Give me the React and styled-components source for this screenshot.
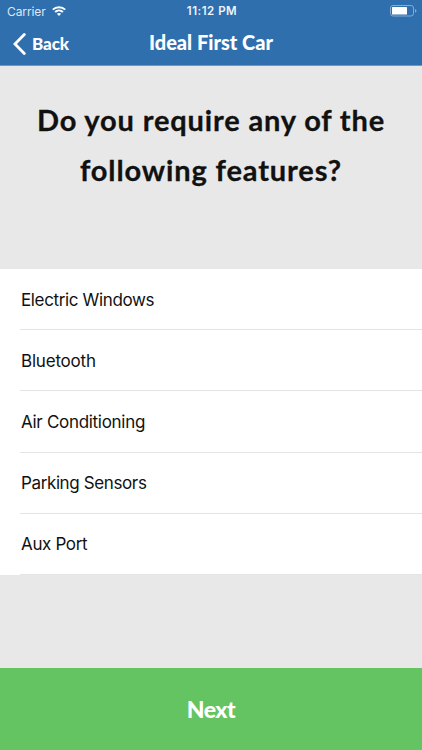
import React from "react";
import styled, { createGlobalStyle } from "styled-components";

const GlobalStyle = createGlobalStyle`
  * {
    box-sizing: border-box;
  }
  body {
    margin: 0;
    background: #e8e8e8;
  }
`;

const Screen = styled.div`
  width: 422px;
  height: 750px;
  display: flex;
  flex-direction: column;
  overflow: hidden;
  background: #e8e8e8;
  color: #111;
`;

const Header = styled.header`
  height: 66px;
  flex: none;
  background: #2f6fae;
  border-bottom: 1px solid #7498bd;
  color: white;
`;

const StatusBar = styled.div`
  height: 22px;
  display: grid;
  grid-template-columns: 1fr auto 1fr;
  align-items: center;
  padding: 0 5px 0 7px;
  font-family: "Inter", sans-serif;
  font-size: 12px;
`;

const Carrier = styled.div`
  display: flex;
  align-items: center;
  gap: 6px;
  letter-spacing: -0.1px;
  color: #dce8f4;
`;

const Clock = styled.div`
  font-size: 11.5px;
  font-weight: 600;
  letter-spacing: 0.5px;
  color: #eef4fa;
`;

const Battery = styled.svg`
  justify-self: end;
`;

const NavBar = styled.nav`
  height: 40px;
  display: grid;
  grid-template-columns: 1fr auto 1fr;
  align-items: center;
  padding-left: 13px;
  padding-right: 13px;
`;

const BackButton = styled.button`
  display: flex;
  align-items: center;
  gap: 6px;
  padding: 3px 0 0;
  border: none;
  background: none;
  color: white;
`;

const NavText = styled.span`
  font-family: "Lato", sans-serif;
  font-weight: 900;
  font-size: ${props => props.size};
  line-height: 24px;
  letter-spacing: ${props => props.spacing};
  white-space: nowrap;
`;

const Question = styled.h1`
  height: 203px;
  flex: none;
  margin: 0;
  padding-top: 29px;
  font-family: "Lato", sans-serif;
  font-weight: 700;
  font-size: 29px;
  line-height: 50px;
  text-align: center;
  -webkit-text-stroke: 0.3px #111;
`;

const QuestionLine = styled.span`
  display: block;
  white-space: nowrap;
  letter-spacing: ${props => props.spacing};
`;

const FeatureList = styled.ul`
  flex: none;
  margin: 0;
  padding: 0 0 0 20px;
  list-style: none;
  background: white;
`;

const Feature = styled.li`
  height: 61.2px;
  display: flex;
  align-items: center;
  padding-top: 1px;
  padding-left: 1px;
  border-bottom: 1px solid #e4e4e5;
  font-family: "Inter", sans-serif;
  font-size: 17px;
  letter-spacing: ${props => props.spacing};
`;

const NextButton = styled.button`
  height: 82px;
  flex: none;
  margin-top: auto;
  padding: 0 0 1px;
  border: none;
  background: #64c461;
  color: white;
`;

const features = [
  { name: "Electric Windows", spacing: "-0.36px" },
  { name: "Bluetooth", spacing: "-0.2px" },
  { name: "Air Conditioning", spacing: "-0.3px" },
  { name: "Parking Sensors", spacing: "-0.38px" },
  { name: "Aux Port", spacing: "-0.35px" },
];

function WifiIcon() {
  return (
    <svg width="14" height="10" viewBox="0 0 14 10" fill="none" stroke="white" strokeWidth="2">
      <path d="M0.8 3.6C4.2 0.3 9.8 0.3 13.2 3.6" />
      <path d="M3.1 6C5.3 3.9 8.7 3.9 10.9 6" />
      <path d="M4.9 7.8C6.1 6.7 7.9 6.7 9.1 7.8L7 10Z" fill="white" stroke="none" />
    </svg>
  );
}

function BatteryIcon() {
  return (
    <Battery width="27" height="12" viewBox="0 0 27 12">
      <rect x="0.5" y="0.5" width="23" height="10.5" rx="2.5" fill="none" stroke="#85acd3" />
      <rect x="2" y="2" width="15" height="7.5" rx="0.6" fill="white" />
      <path d="M25 4Q26.5 4.4 26.5 5.8T25 7.6Z" fill="#85acd3" />
    </Battery>
  );
}

function App() {
  return (
    <>
      <GlobalStyle />
      <Screen>
        <Header>
          <StatusBar>
            <Carrier>Carrier<WifiIcon /></Carrier>
            <Clock>11:12 PM</Clock>
            <BatteryIcon />
          </StatusBar>
          <NavBar>
            <BackButton>
              <svg width="13" height="22" viewBox="0 0 13 22" fill="none" stroke="white" strokeWidth="2.8" strokeLinecap="round">
                <path d="M11.3 1.6L2 11L11.3 20.4" />
              </svg>
              <NavText size="17px" spacing="-0.1px">Back</NavText>
            </BackButton>
            <NavText size="20px" spacing="0px">Ideal First Car</NavText>
          </NavBar>
        </Header>

        <Question>
          <QuestionLine spacing="0.85px">Do you require any of the</QuestionLine>
          <QuestionLine spacing="0.88px">following features?</QuestionLine>
        </Question>

        <FeatureList>
          {features.map(feature => (
            <Feature key={feature.name} spacing={feature.spacing}>{feature.name}</Feature>
          ))}
        </FeatureList>

        <NextButton>
          <NavText size="23px" spacing="-0.5px">Next</NavText>
        </NextButton>
      </Screen>
    </>
  );
}

export default App;
